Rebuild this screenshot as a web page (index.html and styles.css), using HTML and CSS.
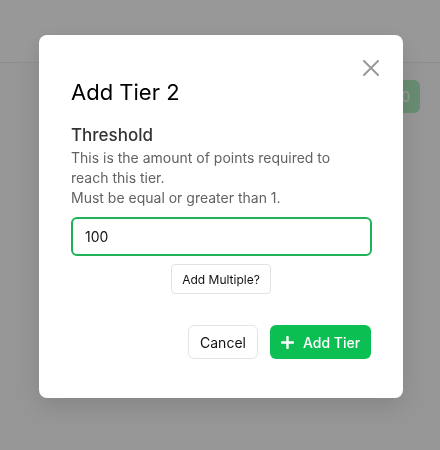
FILE: index.html
```html
<!DOCTYPE html>
<html>
<head>
<meta charset="utf-8">
<link rel="stylesheet" href="styles.css">
</head>
<body>
<div class="page">
  <header class="topbar"></header>
  <main class="content">
    <div class="toolbar"><button class="bg-btn">Add 0</button></div>
  </main>
</div>
<div class="overlay">
  <div class="modal">
    <button class="close" aria-label="Close">
      <svg width="16" height="16" viewBox="0 0 16 16"><path d="M1 1L15 15M15 1L1 15" stroke="#9a9a9a" stroke-width="2" stroke-linecap="round"/></svg>
    </button>
    <h2 class="title">Add Tier 2</h2>
    <h3 class="label">Threshold</h3>
    <p class="desc">This is the amount of points required to reach this tier.<br>Must be equal or greater than 1.</p>
    <input class="field" type="text" value="100">
    <div class="multi-row"><button class="multi">Add Multiple?</button></div>
    <div class="actions">
      <button class="cancel">Cancel</button>
      <button class="primary">
        <svg width="13" height="13" viewBox="0 0 13 13"><path d="M6.5 1V12M1 6.5H12" stroke="#fff" stroke-width="2.4" stroke-linecap="round"/></svg>
        <span>Add Tier</span>
      </button>
    </div>
  </div>
</div>
</body>
</html>
```
FILE: styles.css
```css
* { box-sizing: border-box; }
html, body { margin: 0; padding: 0; }
body {
  font-family: Inter, "Noto Sans", sans-serif;
  background: #fafafa;
  width: 440px;
  height: 450px;
  overflow: hidden;
}
.page { height: 450px; }
.topbar {
  height: 63px;
  background: #fdfdfd;
  border-bottom: 1px solid #ececec;
}
.content { padding: 17px 20px 0 0; }
.toolbar { display: flex; justify-content: flex-end; }
.bg-btn {
  width: 60px;
  height: 33px;
  border: 0;
  border-radius: 6px;
  background: #aeeabf;
  color: #fff;
  font: inherit;
  font-size: 14px;
  text-align: right;
  padding: 0 10px;
}
.overlay {
  position: fixed;
  inset: 0;
  background: rgba(0, 0, 0, 0.4);
  display: flex;
  justify-content: center;
  align-items: flex-start;
  padding-top: 35px;
}
.modal {
  position: relative;
  width: 364px;
  height: 363px;
  margin-left: 2px;
  background: #fff;
  border-radius: 8px;
  padding: 43px 32px 0 32px;
  box-shadow: 0 8px 24px rgba(0,0,0,0.12);
}
.close {
  position: absolute;
  top: 25px;
  right: 24px;
  width: 16px;
  height: 16px;
  padding: 0;
  border: 0;
  background: none;
  display: block;
}
.close svg { display: block; }
.title {
  margin: 0;
  font-size: 22px;
  line-height: 28px;
  font-weight: 400;
  color: #000;
}
.label {
  margin: 18px 0 0;
  font-size: 17px;
  line-height: 22px;
  font-weight: 500;
  color: #333;
}
.desc {
  margin: 2px 0 0;
  font-size: 14px;
  line-height: 20px;
  color: #626262;
}
.field {
  display: block;
  margin-top: 9px;
  width: 301px;
  height: 39px;
  border: 2px solid #1fb155;
  border-radius: 6px;
  padding: 0 12px;
  font: inherit;
  font-size: 14px;
  color: #111;
  outline: none;
}
.multi-row { display: flex; justify-content: center; margin-top: 8px; }
.multi {
  height: 30px;
  padding: 0 10px;
  border: 1px solid #e2e2e2;
  border-radius: 4px;
  background: #fff;
  font: inherit;
  font-size: 12px;
  color: #111;
}
.actions {
  display: flex;
  justify-content: flex-end;
  gap: 12px;
  margin-top: 31px;
}
.cancel {
  height: 34px;
  width: 70px;
  border: 1px solid #e4e4e4;
  border-radius: 6px;
  background: #fff;
  font: inherit;
  font-size: 14px;
  color: #111;
}
.primary {
  height: 34px;
  width: 101px;
  border: 0;
  border-radius: 6px;
  background: #0cbf53;
  color: #fff;
  font: inherit;
  font-size: 14px;
  font-weight: 500;
  display: flex;
  align-items: center;
  justify-content: center;
  gap: 9px;
}
.primary svg { display: block; }
```
